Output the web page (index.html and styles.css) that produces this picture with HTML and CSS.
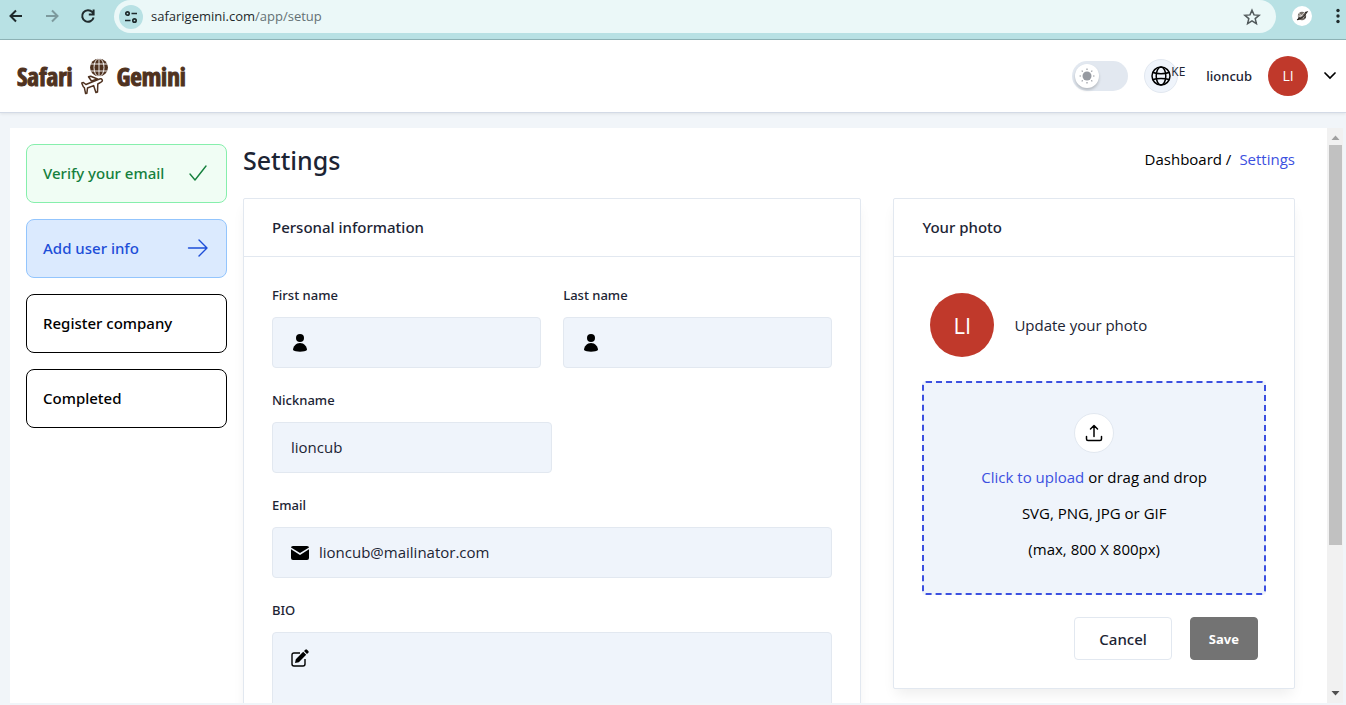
FILE: index.html
```html
<!DOCTYPE html>
<html lang="en">
<head>
<meta charset="utf-8">
<title>Safari Gemini - Settings</title>
<link rel="stylesheet" href="styles.css">
</head>
<body>
<div class="browser">
  <div class="browser-nav">
    <button class="icon-btn" aria-label="Back"><svg width="16" height="16" viewBox="0 0 16 16" fill="none" stroke="#1f2a2c" stroke-width="2"><path d="M14 8H3M8 2.500 2.500 8 8 13.500"/></svg></button>
    <button class="icon-btn" aria-label="Forward"><svg width="16" height="16" viewBox="0 0 16 16" fill="none" stroke="#7d9a9d" stroke-width="2"><path d="M2 8h11M8 2.500 13.500 8 8 13.500"/></svg></button>
    <button class="icon-btn" aria-label="Reload"><svg width="16" height="16" viewBox="0 0 16 16" fill="none" stroke="#1f2a2c" stroke-width="2"><path d="M13.600 9.500A5.800 5.800 0 1 1 12.400 4.200L13.500 5.500M13.600 1.500v5H8.800"/></svg></button>
  </div>
  <div class="address">
    <span class="site-info"><svg width="14" height="14" viewBox="0 0 14 14" fill="none" stroke="#1f2a2c" stroke-width="1.700"><circle cx="3.500" cy="3.500" r="1.700"/><path d="M7.500 3.500H13M1 10.500h5.500"/><circle cx="10.500" cy="10.500" r="1.700"/></svg></span>
    <span class="url">safarigemini.com<span class="url-path">/app/setup</span></span>
    <button class="icon-btn" aria-label="Bookmark"><svg width="18" height="18" viewBox="0 0 18 18" fill="none" stroke="#51595b" stroke-width="1.500"><path d="m9 2.200 2 4.700 5.100.4-3.900 3.300 1.200 5L9 12.900l-4.400 2.700 1.200-5-3.900-3.300L7 6.900z"/></svg></button>
  </div>
  <span class="profile"><svg width="14" height="14" viewBox="0 0 14 14"><circle cx="7" cy="7" r="4.200" fill="#77706a"/><path d="M4 4.500 9.500 9M4 8.500 9 4M3 7h7" stroke="#e4e0dc" stroke-width=".8"/><path d="M2 10.500C4 11 9 8 12 3L10 3.500M3 10l2-1.500M9.500 9.500l1-2" stroke="#302b28" stroke-width="1.200" fill="none"/></svg></span>
  <button class="icon-btn" aria-label="Menu"><svg width="4" height="16" viewBox="0 0 4 16" fill="#1f2a2c"><circle cx="2" cy="2.500" r="1.700"/><circle cx="2" cy="8" r="1.700"/><circle cx="2" cy="13.500" r="1.700"/></svg></button>
</div>

<header class="topbar">
  <a class="logo" href="#" aria-label="Safari Gemini">
    <span>Safari</span>
    <svg width="28" height="37" viewBox="0 0 28 37">
      <circle cx="18" cy="9.500" r="9" fill="#4f3220"/>
      <g fill="none" stroke="#fff" stroke-width=".9"><path d="M18 0v19M9 6h18M9 13h18"/><ellipse cx="18" cy="9.500" rx="5" ry="9"/></g>
      <g fill="#fff" stroke="#4f3220" stroke-width="1.500" stroke-linejoin="round"><path d="M10.500 23 7.500 18.800l2.200-.6L16.500 21z"/><path d="M.8 25l1.600-.5 2.500 2L18.500 21c2.600-.8 4 1.700 1.500 3.200L16.800 26l-.3 8-1.600.6-2.300-7L6.500 30l-.6 5.200-1.300.4-1.200-5.800C1.800 29.300 1.600 27 .8 25z"/></g>
    </svg>
    <span>Gemini</span>
  </a>
  <div class="tools">
    <button class="theme-switch" role="switch" aria-checked="false" aria-label="Dark mode"><span class="knob"><svg width="16" height="16" viewBox="0 0 16 16"><circle cx="8" cy="8" r="4.500" fill="#969aa1"/><path d="M8 .5V2M8 14v1.500M.5 8H2M14 8h1.500M2.700 2.700l1 1M12.300 12.300l1 1M2.700 13.300l1-1M12.300 3.700l1-1" stroke="#969aa1" stroke-width="1.200"/></svg></span></button>
    <button class="lang" aria-label="Country: KE"><svg width="20" height="20" viewBox="0 0 20 20" fill="none" stroke="#000" stroke-width="1.500"><circle cx="10" cy="10" r="9"/><ellipse cx="10" cy="10" rx="4.800" ry="9"/><path d="M2 6.500c4 1.500 12 1.500 16 0M2 13.500c4-1.500 12-1.500 16 0"/></svg><span class="lang-code">KE</span></button>
    <button class="user"><span class="user-name">lioncub</span><span class="avatar">LI</span><svg width="12" height="8" viewBox="0 0 12 8" fill="none" stroke="#000" stroke-width="1.700" stroke-linecap="round"><path d="m1 1 5 5 5-5"/></svg></button>
  </div>
</header>

<div class="page">
  <main class="panel">
    <nav aria-label="Setup steps">
      <ol class="steps">
        <li class="step done">Verify your email<svg width="22" height="22" viewBox="0 0 22 22" fill="none" stroke="currentColor" stroke-width="1.400" stroke-linecap="round" stroke-linejoin="round"><path d="m3 12 5 6L19 4"/></svg></li>
        <li class="step current" aria-current="step">Add user info<svg width="22" height="22" viewBox="0 0 22 22" fill="none" stroke="currentColor" stroke-width="1.400" stroke-linecap="round" stroke-linejoin="round"><path d="M1.500 11H20M12 3l8 8-8 8"/></svg></li>
        <li class="step">Register company</li>
        <li class="step">Completed</li>
      </ol>
    </nav>
    <div class="content">
      <div class="heading">
        <h1>Settings</h1>
        <div class="crumbs"><span>Dashboard /</span><a href="#">Settings</a></div>
      </div>
      <div class="cards">
        <section class="card card-info">
          <h2>Personal information</h2>
          <form class="form">
            <div class="pair">
              <div class="field"><label for="first">First name</label><div class="box"><svg width="18" height="18" viewBox="0 0 18 18"><circle cx="9" cy="4" r="4"/><path d="M2 16c0-3.500 3-7 7-7s7 3.500 7 7c-2 2.200-12 2.200-14 0z"/></svg><input id="first" type="text"></div></div>
              <div class="field"><label for="last">Last name</label><div class="box"><svg width="18" height="18" viewBox="0 0 18 18"><circle cx="9" cy="4" r="4"/><path d="M2 16c0-3.500 3-7 7-7s7 3.500 7 7c-2 2.200-12 2.200-14 0z"/></svg><input id="last" type="text"></div></div>
            </div>
            <div class="field half"><label for="nick">Nickname</label><div class="box"><input id="nick" type="text" value="lioncub"></div></div>
            <div class="field"><label for="email">Email</label><div class="box"><svg width="18" height="18" viewBox="0 0 18 18"><path d="M2 2h14q2 0 2 1.500L9 9 0 3.500Q0 2 2 2z"/><path d="M0 5.200 9 11l9-5.800V14q0 2-2 2H2q-2 0-2-2z"/></svg><input id="email" type="email" value="lioncub@mailinator.com"></div></div>
            <div class="field"><label for="bio">BIO</label><div class="box tall"><svg width="18" height="18" viewBox="0 0 18 18"><path d="M9 4H3Q1 4 1 6v9q0 2 2 2h9q2 0 2-2v-5" fill="none" stroke="#000" stroke-width="1.400"/><path d="m4 14 .8-3.800 7.400-7.400 3 3-7.400 7.400zM13 2l1.300-1.300q.8-.8 1.700 0l1.300 1.300q.8.900 0 1.700L16 5z"/></svg><textarea id="bio" rows="6"></textarea></div></div>
          </form>
        </section>
        <section class="card card-photo">
          <h2>Your photo</h2>
          <div class="photo">
            <div class="photo-row"><span class="avatar large">LI</span><span>Update your photo</span></div>
            <div class="drop">
              <span class="upload"><svg width="18" height="18" viewBox="0 0 18 18" fill="none" stroke="#000" stroke-width="1.500" stroke-linecap="round" stroke-linejoin="round"><path d="M9 12.500V1.500M5.500 5 9 1.500 12.500 5M1.500 12.500V15q0 1.500 1.500 1.500h12q1.500 0 1.500-1.500v-2.500"/></svg></span>
              <p><a href="#">Click to upload</a> or drag and drop</p>
              <p>SVG, PNG, JPG or GIF</p>
              <p>(max, 800 X 800px)</p>
            </div>
            <div class="actions"><button class="btn">Cancel</button><button class="btn save">Save</button></div>
          </div>
        </section>
      </div>
    </div>
  </main>
  <div class="scrollbar" aria-hidden="true">
    <svg width="9" height="5" viewBox="0 0 9 5"><path d="M.5 5 4.500.5 8.500 5z" fill="#a0a0a0"/></svg>
    <div class="track"><div class="thumb"></div></div>
    <svg width="9" height="5" viewBox="0 0 9 5"><path d="M.5 0 4.500 4.500 8.500 0z" fill="#505050"/></svg>
  </div>
</div>
</body>
</html>
```
FILE: styles.css
```css
* { box-sizing: border-box; }
body {
  margin: 0;
  height: 100vh;
  display: flex;
  flex-direction: column;
  overflow: hidden;
  background: #f1f5f9;
  color: #1c2434;
  font: 400 15px/24px "Open Sans", "Noto Sans", sans-serif;
}
button, input, textarea { font: inherit; color: inherit; }
button { border: 0; background: none; padding: 0; }
a { color: #3c50e0; text-decoration: none; }
h1, h2, p, ol { margin: 0; padding: 0; }
svg { flex: none; display: block; }

.browser {
  display: flex;
  align-items: flex-start;
  flex: none;
  height: 40px;
  padding: 0 6px 0 8px;
  background: #b8e1e4;
  border-bottom: 1px solid #8fb5b8;
}
.browser > *, .browser-nav { height: 32px; display: flex; align-items: center; }
.browser-nav { gap: 20px; }
.address {
  flex: 1;
  margin: 0 16px 0 18px;
  padding: 0 15px 0 5px;
  height: 33px;
  border-radius: 17px;
  background: #ebf8f8;
}
.site-info {
  display: grid;
  place-items: center;
  width: 24px;
  height: 24px;
  border-radius: 50%;
  background: #b8e1e4;
}
.url { flex: 1; margin-left: 8px; padding-bottom: 2px; font-size: 13px; color: #1f2a2c; }
.url-path { color: #647174; }
.browser .profile {
  height: 20px;
  width: 20px;
  margin: 6px 24px 0 0;
  justify-content: center;
  border-radius: 50%;
  background: #fff;
}

.topbar {
  display: flex;
  align-items: center;
  justify-content: space-between;
  flex: none;
  height: 73px;
  padding: 0 10px 0 17px;
  background: #fff;
  border-bottom: 1px solid #d3dae6;
  box-shadow: 0 1px 3px rgba(0, 0, 0, .08);
}
.logo {
  display: flex;
  align-items: center;
  gap: 8px;
  color: #4f3220;
  font: 700 25px/32px "Open Sans Condensed", "Roboto Condensed", "Liberation Sans Narrow", sans-serif;
  -webkit-text-stroke: 1px #4f3220;
}
.tools { display: flex; align-items: center; }
.theme-switch {
  display: flex;
  align-items: center;
  width: 56px;
  height: 30px;
  padding: 0 3px;
  border-radius: 15px;
  background: #e2e8f0;
}
.knob {
  display: grid;
  place-items: center;
  width: 24px;
  height: 24px;
  border-radius: 50%;
  background: #fff;
  box-shadow: 0 2px 3px rgba(0, 0, 0, .2);
}
.lang {
  display: flex;
  align-items: center;
  width: 34px;
  height: 34px;
  margin: 0 28px 0 16px;
  padding-left: 6px;
  border: 1px solid #e2e8f0;
  border-radius: 50%;
  background: #eff4fb;
}
.lang-code { align-self: flex-start; font-size: 12px; line-height: 24px; }
.user { display: flex; align-items: center; gap: 16px; }
.step, h1, h2, .field label, .user-name, .btn {
  font-family: "Noto Sans", "Open Sans", sans-serif;
  font-weight: 500;
}
.user-name { font-size: 13px; }
.avatar {
  display: grid;
  place-items: center;
  width: 40px;
  height: 40px;
  border-radius: 50%;
  background: #c0392b;
  color: #fff;
  font-size: 14px;
}
.avatar.large { width: 64px; height: 64px; font-size: 22px; }

.page {
  flex: 1;
  min-height: 0;
  display: flex;
  padding: 15px 3px 2px 10px;
}
.panel {
  flex: 1;
  min-width: 0;
  display: flex;
  gap: 16px;
  padding: 16px 32px 0 16px;
  overflow: hidden;
  background: #fff;
}
.steps { display: grid; gap: 16px; width: 201px; list-style: none; }
.step {
  display: flex;
  align-items: center;
  justify-content: space-between;
  padding: 15px 17px 17px 16px;
  min-height: 59px;
  border: 1px solid #000;
  border-radius: 8px;
  color: #000;
}
.step.done { color: #15803d; background: #f0fdf4; border-color: #86efac; }
.step.current { color: #1d4ed8; background: #dbeafe; border-color: #93c5fd; }

.content { flex: 1; min-width: 0; }
.heading { display: flex; justify-content: space-between; height: 54px; }
h1 { font-size: 25px; line-height: 32px; }
.crumbs { display: flex; gap: 8px; line-height: 30px; color: #000; }
.cards { display: grid; grid-template-columns: repeat(5, 1fr); gap: 32px; align-items: start; }
.card {
  border: 1px solid #e2e8f0;
  border-radius: 2px;
  background: #fff;
  box-shadow: 0 8px 13px -3px rgba(0, 0, 0, .07);
}
.card-info { grid-column: span 3; }
.card-photo { grid-column: span 2; }
h2 {
  padding: 16px 28px 17px;
  border-bottom: 1px solid #e2e8f0;
  font-size: 15px;
  line-height: 24px;
}
.form, .photo { padding: 28px; }
.form { display: grid; gap: 22px; }
.pair { display: grid; grid-template-columns: 1fr 1fr; gap: 22px; }
.half { width: 50%; }
.field label {
  display: block;
  margin-bottom: 12px;
  font-size: 13px;
  line-height: 20px;
}
.box {
  display: flex;
  align-items: center;
  gap: 10px;
  padding: 12px 18px;
  border: 1px solid #e2e8f0;
  border-radius: 4px;
  background: #eff4fb;
}
.box.tall { align-items: flex-start; padding-top: 16px; }
.box input, .box textarea {
  flex: 1;
  min-width: 0;
  padding: 0;
  border: 0;
  outline: 0;
  resize: none;
  background: none;
  line-height: 24px;
}
.box input { height: 25px; padding-bottom: 2px; }

.photo-row {
  display: flex;
  align-items: center;
  gap: 20px;
  padding: 8px 8px 24px;
}
.drop {
  display: flex;
  flex-direction: column;
  align-items: center;
  gap: 12px;
  padding: 30px 16px 32px;
  border: 2px dashed #3c50e0;
  border-radius: 4px;
  background: #eff4fb;
  color: #000;
}
.upload {
  display: grid;
  place-items: center;
  width: 40px;
  height: 40px;
  border: 1px solid #e2e8f0;
  border-radius: 50%;
  background: #fff;
}
.actions { display: flex; justify-content: flex-end; gap: 18px; padding: 22px 8px 0 0; }
.btn {
  height: 43px;
  padding: 0 24px;
  border: 1px solid #e2e8f0;
  border-radius: 4px;
}
.save { padding: 0 18px; border-color: #737373; background: #737373; color: #fff; font-size: 13px; font-weight: 700; }

.scrollbar {
  display: flex;
  flex-direction: column;
  align-items: center;
  width: 16px;
  padding: 7px 0;
  background: #f1f1f1;
}
.track { flex: 1; width: 13px; padding: 5px 0; }
.thumb { height: 74%; background: #c1c1c1; }
```
